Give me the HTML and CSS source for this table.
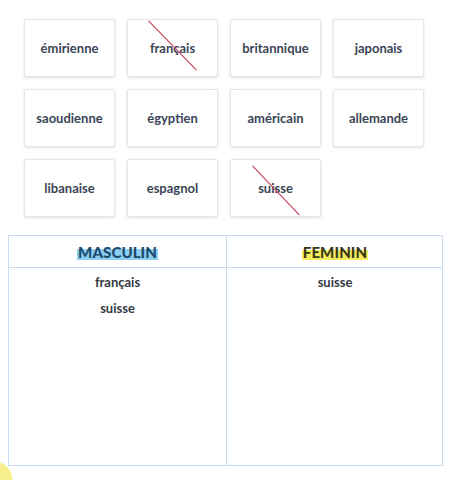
FILE: index.html
```html
<!DOCTYPE html>
<html lang="fr">
<head>
<meta charset="utf-8">
<link rel="stylesheet" href="styles.css">
</head>
<body>
<div class="page">
  <div class="cards">
    <div class="card">émirienne</div>
    <div class="card used">français<svg class="strike" viewBox="0 0 91 58" preserveAspectRatio="none"><line x1="21" y1="1" x2="70" y2="52"/></svg></div>
    <div class="card">britannique</div>
    <div class="card">japonais</div>
    <div class="card">saoudienne</div>
    <div class="card">égyptien</div>
    <div class="card">américain</div>
    <div class="card">allemande</div>
    <div class="card">libanaise</div>
    <div class="card">espagnol</div>
    <div class="card used">suisse<svg class="strike" viewBox="0 0 91 58" preserveAspectRatio="none"><line x1="22" y1="6" x2="70" y2="57"/></svg></div>
  </div>
  <div class="table">
    <div class="col">
      <div class="head"><span class="hl hl-blue">MASCULIN</span></div>
      <div class="items">
        <div class="item">français</div>
        <div class="item">suisse</div>
      </div>
    </div>
    <div class="col">
      <div class="head"><span class="hl hl-yellow">FEMININ</span></div>
      <div class="items">
        <div class="item">suisse</div>
      </div>
    </div>
  </div>
</div>
<div class="corner"></div>
</body>
</html>
```
FILE: styles.css
```css
html, body {
  margin: 0;
  padding: 0;
  background: #ffffff;
}
body {
  font-family: Lato, "Open Sans", sans-serif;
  width: 450px;
  height: 480px;
  overflow: hidden;
  position: relative;
}
.page {
  padding: 19px 8px 0 8px;
}
.cards {
  display: grid;
  grid-template-columns: repeat(4, 91px);
  grid-auto-rows: 58px;
  column-gap: 12px;
  row-gap: 12px;
  padding-left: 16px;
}
.card {
  position: relative;
  display: flex;
  align-items: center;
  justify-content: center;
  border: 1px solid #e4e6ea;
  border-radius: 2px;
  box-shadow: 0 1px 3px rgba(0, 0, 0, 0.12);
  background: #fff;
  font-size: 13px;
  font-weight: 700;
  color: #3a4556;
}
.strike {
  position: absolute;
  left: 0;
  top: 0;
  width: 100%;
  height: 100%;
  overflow: visible;
}
.strike line {
  stroke: #c8445a;
  stroke-width: 1.2;
}
.table {
  margin-top: 18px;
  display: grid;
  grid-template-columns: 217px 217px;
  height: 231px;
  border: 1px solid #c9dcef;
  box-sizing: border-box;
  width: 435px;
}
.col + .col {
  border-left: 1px solid #c9dcef;
}
.head {
  height: 31px;
  border-bottom: 1px solid #c9dcef;
  display: flex;
  align-items: center;
  justify-content: center;
}
.hl {
  font-size: 15px;
  font-weight: 900;
  letter-spacing: 0.1px;
  padding: 0 1px;
}
.hl-blue {
  color: #1b4a6b;
  background: linear-gradient(to bottom, transparent 35%, #8ccdf0 35%, #8ccdf0 92%, transparent 92%);
}
.hl-yellow {
  color: #3b3a16;
  background: linear-gradient(to bottom, transparent 40%, #f4ec5c 40%, #f4ec5c 92%, transparent 92%);
}
.items {
  display: flex;
  flex-direction: column;
  align-items: center;
  padding-top: 5px;
  gap: 8px;
}
.item {
  font-size: 13px;
  font-weight: 700;
  color: #333a44;
  line-height: 18px;
}
.corner {
  position: absolute;
  left: -14px;
  bottom: -14px;
  width: 26px;
  height: 32px;
  border-radius: 50%;
  background: #f6f08c;
  transform: rotate(-20deg);
}
```
